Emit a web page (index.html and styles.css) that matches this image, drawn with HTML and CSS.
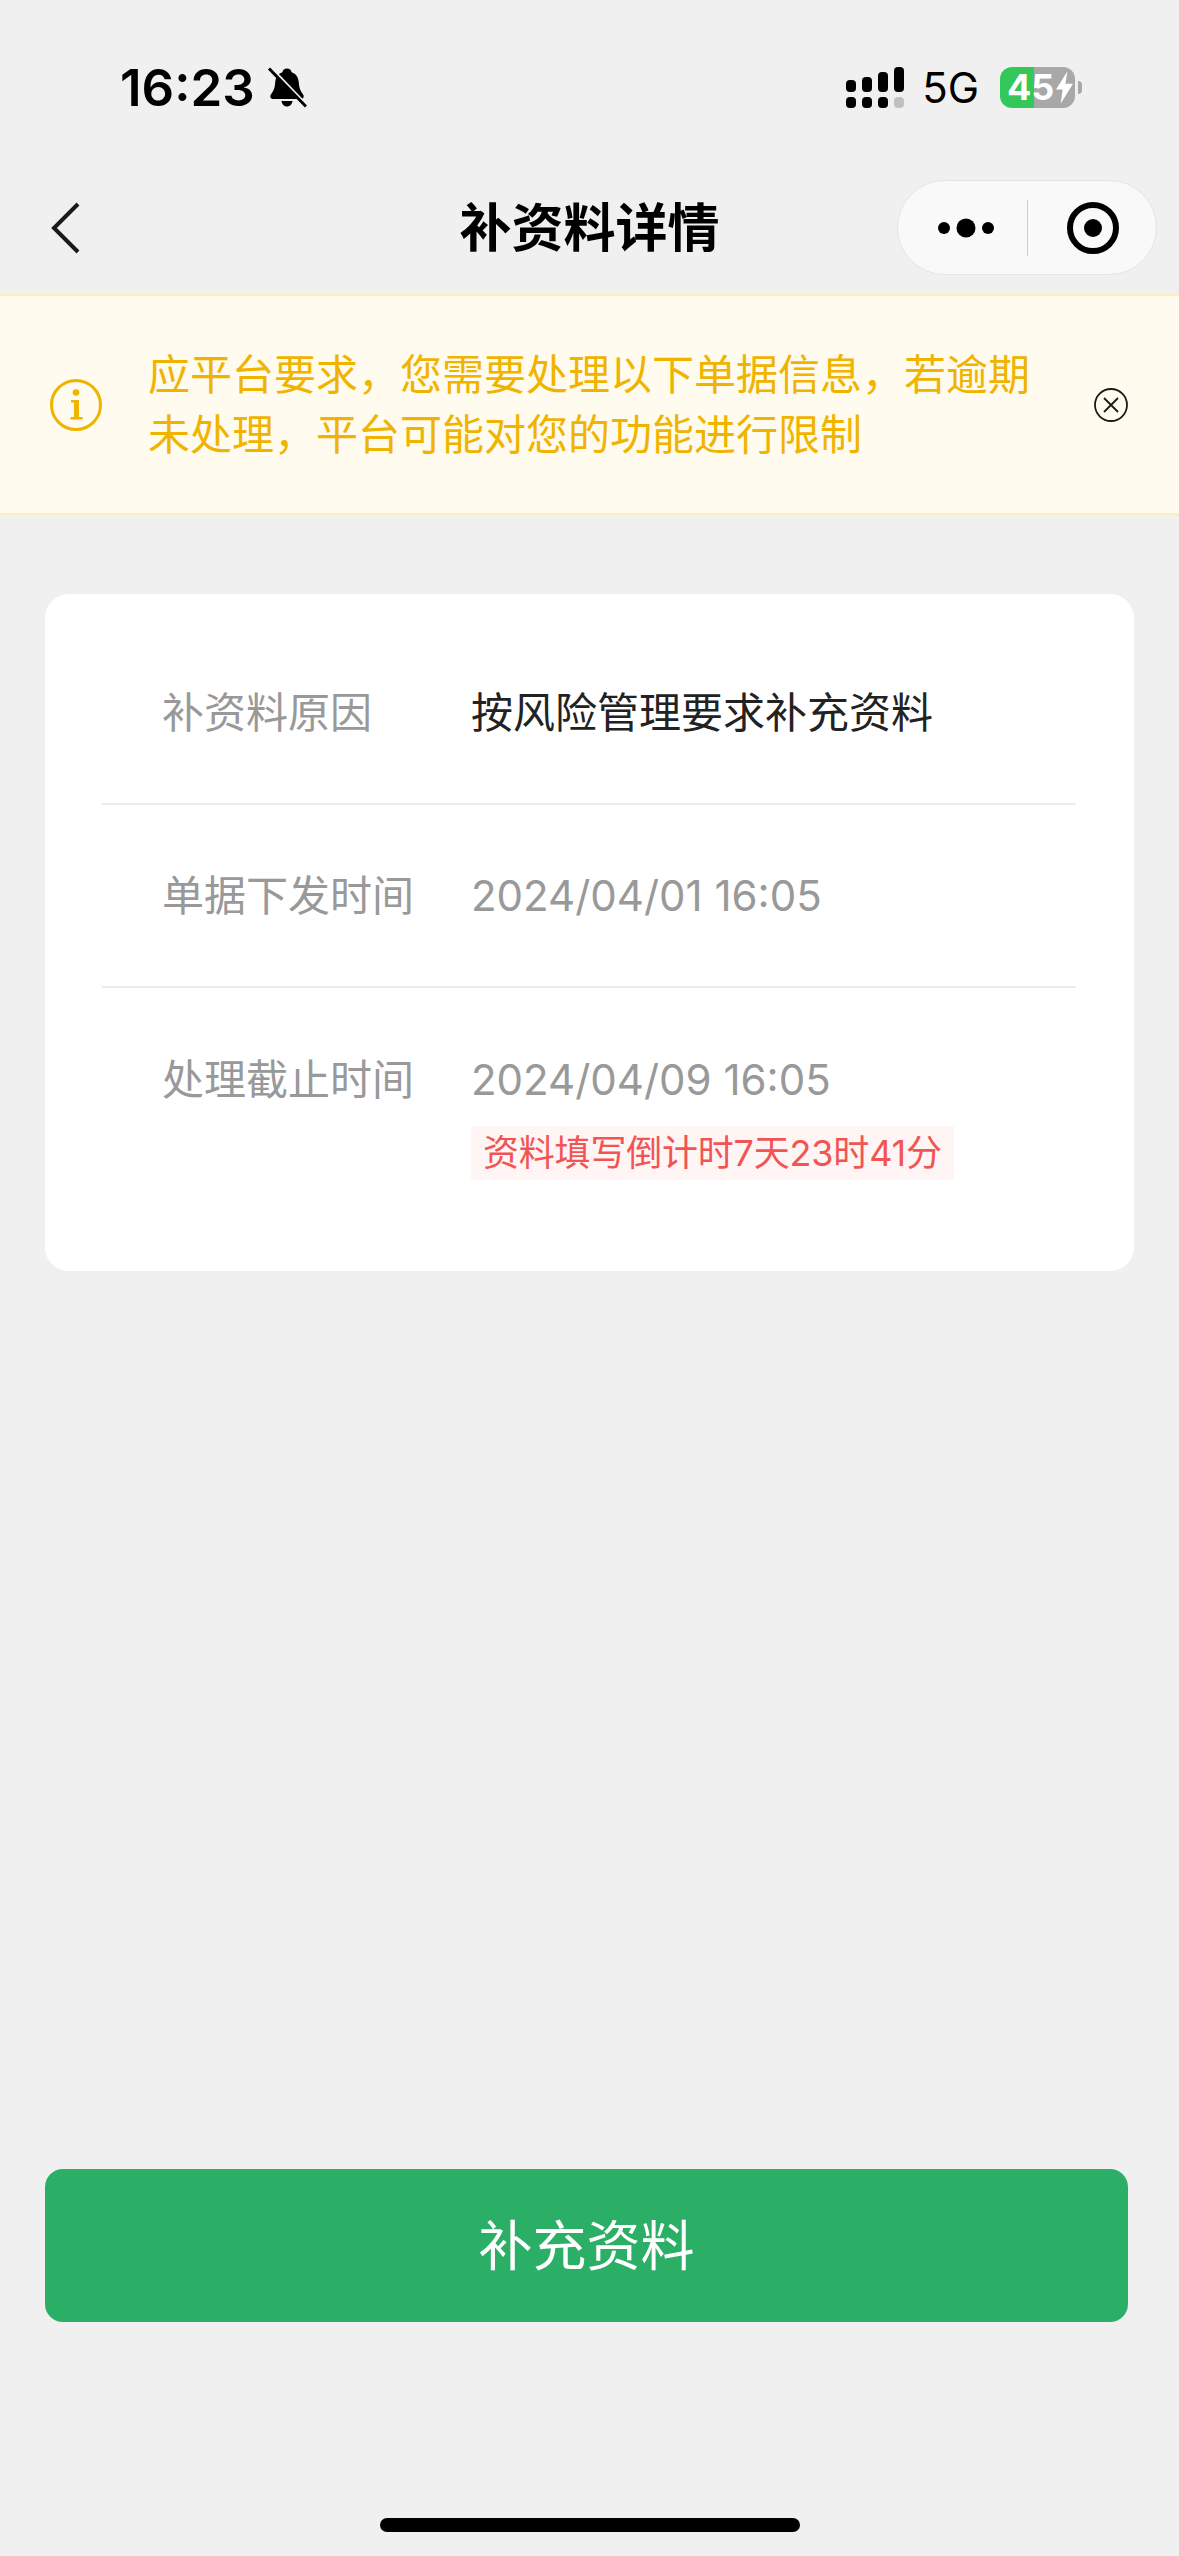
FILE: index.html
```html
<!DOCTYPE html>
<html lang="zh-CN">

<head>
    <meta charset="UTF-8">
    <meta name="viewport" content="width=device-width, initial-scale=1.0">
    <title>补资料详情</title>
    <link rel="stylesheet" href="styles.css">
</head>

<body>
    <div class="page">
        <div class="status-bar">
            <div class="status-left">
                <span class="time">16:23</span>
                <svg class="bell" viewBox="0 0 40 40">
                    <path d="M20 1c2.600 0 4.200 1.700 4.600 3.800 4.600 1.500 6.800 5.400 7.200 10.200.3 4.800 1.300 8.200 3.800 11.200 2 2.300 1.200 5.300-2 5.300H6.400c-3.200 0-4-3-2-5.300 2.500-3 3.500-6.400 3.800-11.200.4-4.800 2.600-8.700 7.200-10.200C15.800 2.700 17.400 1 20 1zM14.500 33.500h11c-.4 3.400-2.700 5.500-5.500 5.500s-5.100-2.100-5.500-5.500z" />
                    <path class="bell-gap" d="M1 -2 42 41" />
                    <path class="bell-slash" d="M2 1 39 39" />
                </svg>
            </div>
            <div class="status-right">
                <svg class="signal" viewBox="0 0 58 41">
                    <rect x="0" y="13" width="10" height="12" rx="4" />
                    <rect x="16" y="10" width="10" height="15" rx="4" />
                    <rect x="32" y="5" width="10" height="20" rx="4" />
                    <rect x="48" y="0" width="10" height="25" rx="4" />
                    <rect x="0" y="30" width="10" height="11" rx="4" />
                    <rect x="16" y="30" width="10" height="11" rx="4" />
                    <rect x="32" y="30" width="10" height="11" rx="4" />
                    <rect class="signal-off" x="48" y="30" width="10" height="11" rx="4" />
                </svg>
                <span class="network">5G</span>
                <div class="battery">
                    <span class="battery-num">45</span>
                    <svg class="bolt" viewBox="0 0 18 34">
                        <path d="M12 0 0 19h7L5 34 18 13h-8z" />
                    </svg>
                </div>
                <div class="battery-nub"></div>
            </div>
        </div>

        <div class="nav-bar">
            <svg class="back" viewBox="0 0 30 52">
                <path d="M27 2 3 26l24 24" />
            </svg>
            <h1 class="nav-title">补资料详情</h1>
            <div class="capsule">
                <svg class="capsule-more" viewBox="0 0 56 20">
                    <circle cx="6" cy="10" r="6" />
                    <circle cx="28" cy="10" r="9.500" />
                    <circle cx="50" cy="10" r="6" />
                </svg>
                <div class="capsule-line"></div>
                <svg class="capsule-target" viewBox="0 0 52 52">
                    <circle class="target-ring" cx="26" cy="26" r="23" />
                    <circle cx="26" cy="26" r="9" />
                </svg>
            </div>
        </div>

        <div class="notice">
            <svg class="notice-icon" viewBox="0 0 52 52">
                <circle class="notice-ring" cx="26" cy="26" r="24.500" />
                <circle class="notice-fill" cx="26" cy="13.500" r="3.300" />
                <path class="notice-fill" d="M21 21h8v17h3.500v2.500h-12V38H24V23.500h-3z" />
            </svg>
            <p class="notice-text">应平台要求，您需要处理以下单据信息，若逾期未处理，平台可能对您的功能进行限制</p>
            <svg class="notice-close" viewBox="0 0 34 34">
                <circle cx="17" cy="17" r="16" />
                <path d="M10 10l14 14M24 10 10 24" />
            </svg>
        </div>

        <div class="card">
            <div class="row row-first">
                <div class="row-label">补资料原因</div>
                <div class="row-value row-value-dark">按风险管理要求补充资料</div>
            </div>
            <div class="row">
                <div class="row-label">单据下发时间</div>
                <div class="row-value">2024/04/01 16:05</div>
            </div>
            <div class="row row-last">
                <div class="row-label">处理截止时间</div>
                <div>
                    <div class="row-value">2024/04/09 16:05</div>
                    <div class="countdown">资料填写倒计时7天23时41分</div>
                </div>
            </div>
        </div>

        <div class="btn-main">补充资料</div>
        <div class="home-bar"></div>
    </div>
</body>

</html>
```

FILE: styles.css
```css
* {
    box-sizing: border-box;
}

body {
    margin: 0;
    background-color: #f0f0f0;
    font-family: Inter, "Noto Sans CJK SC", sans-serif;
}

.page {
    display: flex;
    flex-direction: column;
    height: 2556px;
    overflow: hidden;
}

/* status bar */
.status-bar {
    display: flex;
    justify-content: space-between;
    align-items: flex-start;
    height: 180px;
    padding: 67px 97px 0 120px;
}

.status-left {
    display: flex;
    align-items: center;
    gap: 12px;
}

.time {
    font-size: 51px;
    line-height: 41px;
    font-weight: 600;
    color: #000;
}

.bell {
    width: 40px;
    height: 41px;
}

.bell-gap {
    stroke: #f0f0f0;
    stroke-width: 4;
    fill: none;
}

.bell-slash {
    stroke: #000;
    stroke-width: 3;
    fill: none;
}

.status-right {
    display: flex;
    align-items: center;
}

.signal {
    width: 58px;
    height: 41px;
    margin-right: 18px;
}

.signal-off {
    fill: #c0c0c0;
}

.network {
    font-size: 42px;
    line-height: 41px;
    color: #000;
    margin-right: 21px;
}

.battery {
    display: flex;
    align-items: center;
    width: 75px;
    height: 41px;
    padding-left: 7px;
    border-radius: 12px;
    background: linear-gradient(to right, #34c759 34px, #a8a8a8 34px);
}

.battery-num {
    font-size: 36px;
    line-height: 41px;
    font-weight: 700;
    color: #fff;
}

.bolt {
    width: 17px;
    height: 33px;
    fill: #fff;
    margin-left: 2px;
}

.battery-nub {
    width: 4px;
    height: 13px;
    margin-left: 3px;
    background-color: #a8a8a8;
    border-radius: 0 4px 4px 0;
}

/* nav */
.nav-bar {
    position: relative;
    display: flex;
    align-items: center;
    justify-content: center;
    height: 114px;
}

.back {
    position: absolute;
    left: 51px;
    top: 22px;
    width: 30px;
    height: 52px;
    fill: none;
    stroke: #1a1a1a;
    stroke-width: 4;
}

.nav-title {
    margin: 0 0 16px;
    font-size: 52px;
    line-height: 70px;
    font-weight: 700;
    color: #000;
}

.capsule {
    position: absolute;
    left: 897px;
    top: 0;
    display: flex;
    align-items: center;
    width: 260px;
    height: 95px;
    padding-left: 40px;
    background-color: #f9f9f9;
    border: 1px solid #e4e4e4;
    border-radius: 48px;
}

.capsule-more {
    width: 56px;
    height: 20px;
}

.capsule-line {
    width: 1px;
    height: 56px;
    margin-left: 33px;
    background-color: #cccccc;
}

.capsule-target {
    width: 52px;
    height: 52px;
    margin-left: 39px;
}

.target-ring {
    fill: none;
    stroke: #000;
    stroke-width: 6;
}

/* notice */
.notice {
    display: flex;
    align-items: center;
    justify-content: space-between;
    height: 221px;
    padding: 0 51px 0 50px;
    background-color: #fffbee;
    border-top: 2px solid #ffeebd;
    border-bottom: 2px solid #ffeebd;
}

.notice-icon {
    flex: none;
    width: 52px;
    height: 52px;
}

.notice-ring {
    fill: none;
    stroke: #f0b400;
    stroke-width: 3;
}

.notice-fill {
    fill: #f0b400;
}

.notice-text {
    width: 890px;
    margin: 0 0 0 46px;
    font-size: 42px;
    line-height: 60px;
    color: #f0b400;
}

.notice-close {
    flex: none;
    width: 34px;
    height: 34px;
    margin-left: auto;
    fill: none;
    stroke: #1a1a1a;
    stroke-width: 1.800;
}

/* card */
.card {
    height: 677px;
    margin: 79px 45px 0;
    padding: 0 58px 0 57px;
    background-color: #fff;
    border-radius: 24px;
}

.row {
    display: flex;
    height: 183px;
    padding: 62px 0 0 60px;
    border-bottom: 2px solid #ececec;
}

.row-first {
    height: 211px;
    padding-top: 90px;
}

.row-last {
    padding-top: 63px;
    border-bottom: none;
}

.row-label {
    width: 309px;
    font-size: 42px;
    line-height: 58px;
    color: #999999;
}

.row-value {
    font-size: 42px;
    line-height: 58px;
    color: #999999;
}

.row-value-dark {
    color: #222222;
}

.countdown {
    width: max-content;
    margin-top: 17px;
    padding: 0 12px;
    font-size: 36px;
    line-height: 54px;
    letter-spacing: -0.2px;
    color: #f25454;
    background-color: #fff5f5;
}

/* bottom */
.btn-main {
    width: 1083px;
    height: 153px;
    margin: auto 0 0 45px;
    font-size: 54px;
    line-height: 155px;
    text-align: center;
    color: #fff;
    background-color: #2baf66;
    border-radius: 18px;
}

.home-bar {
    width: 420px;
    height: 14px;
    margin: 196px 0 24px 380px;
    background-color: #000;
    border-radius: 7px;
    flex: none;
}
```
